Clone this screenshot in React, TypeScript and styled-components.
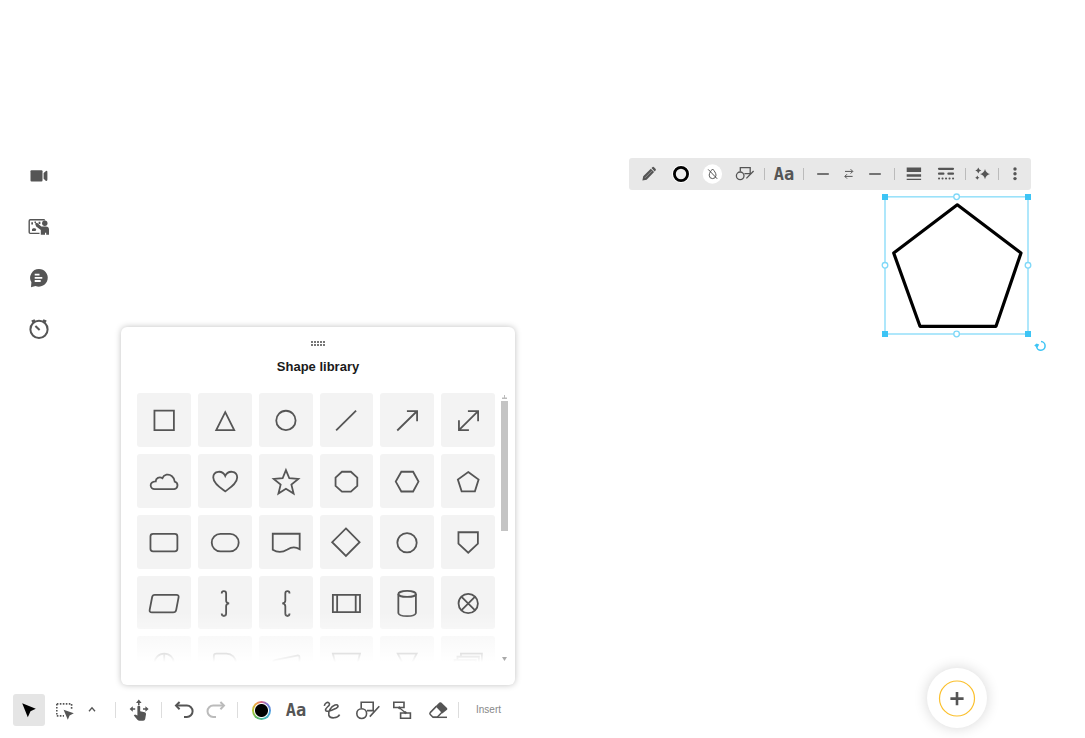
import React from "react";
import styled, { createGlobalStyle } from "styled-components";

const ink = "#555";
const accent = "#3dc4f5";

const GlobalStyle = createGlobalStyle`
  *, *::before, *::after { box-sizing: border-box; }
  body {
    margin: 0;
    background: #fff;
    color: ${ink};
    font-family: "Liberation Sans", Arial, sans-serif;
  }
`;

const Page = styled.div`
  position: relative;
  display: flex;
  flex-direction: column;
  min-height: 100vh;
  overflow: hidden;
`;

const Workspace = styled.div`
  display: flex;
  flex: 1;
`;

const Rail = styled.nav`
  display: flex;
  flex-direction: column;
  gap: 19px;
  width: 121px;
  padding: 160px 0 0 23px;
`;

const IconButton = styled.button<{ $w?: number; $active?: boolean }>`
  display: flex;
  flex: none;
  align-items: center;
  justify-content: center;
  width: ${(p) => p.$w ?? 32}px;
  height: 32px;
  padding: 0;
  border: 0;
  border-radius: 3px;
  background: ${(p) => (p.$active ? "#e5e5e5" : "transparent")};
  color: inherit;
  cursor: pointer;
`;

const TextIcon = styled.span`
  font: bold 17px/20px "DejaVu Sans Mono", monospace;
`;

const IconSvg = styled.svg`
  display: block;
  flex: none;
  fill: none;
  stroke: currentColor;
  stroke-width: 2;
`;

const Library = styled.section`
  align-self: flex-end;
  width: 394px;
  height: 358px;
  margin-bottom: 9px;
  padding: 14px 7px 0 16px;
  border-radius: 6px;
  background: #fff;
  box-shadow: 0 0 6px rgba(0, 0, 0, 0.25);
`;

const Grip = styled.div`
  display: grid;
  grid-template-columns: repeat(5, 2px);
  grid-auto-rows: 2px;
  gap: 1px;
  justify-content: center;
  margin-right: 9px;

  i { background: #777; }
`;

const Title = styled.h2`
  margin: 13px 9px 18px 0;
  color: #1a1a1a;
  font-size: 13px;
  line-height: 16px;
  text-align: center;
`;

const ScrollArea = styled.div`
  position: relative;
  display: flex;
  gap: 6px;
  height: 269px;
  overflow: hidden;
`;

const ShapeGrid = styled.div`
  display: grid;
  flex: 1;
  grid-template-columns: repeat(6, 1fr);
  align-content: start;
  gap: 7px;
`;

const ShapeTile = styled.button`
  aspect-ratio: 1;
  padding: 0;
  border: 0;
  border-radius: 3px;
  background: #f3f3f3;
  color: ${ink};

  svg { width: 100%; height: 100%; }
`;

const Fade = styled.div`
  position: absolute;
  right: 13px;
  bottom: 0;
  left: 0;
  height: 50px;
  background: linear-gradient(rgba(255, 255, 255, 0), #fff);
  pointer-events: none;
`;

const ScrollTrack = styled.div`
  display: flex;
  flex-direction: column;
  align-items: center;
  justify-content: space-between;
  width: 7px;
  padding: 2px 0 1px;
`;

const ScrollThumb = styled.div`
  width: 7px;
  height: 130px;
  margin: 2px 0 auto;
  background: #c4c4c4;
`;

const BottomBar = styled.footer`
  display: flex;
  align-items: center;
  padding: 0 13px 12px;
`;

const ToolGroup = styled.div<{ $gap?: number; $end?: number }>`
  display: flex;
  align-items: center;
  gap: ${(p) => p.$gap ?? 0}px;
  margin-right: ${(p) => p.$end ?? 0}px;
`;

const Divider = styled.span<{ $tight?: boolean }>`
  flex: none;
  width: 1px;
  height: ${(p) => (p.$tight ? 12 : 16)}px;
  margin: ${(p) => (p.$tight ? "0 3px" : "0 7px 0 6px")};
  background: ${(p) => (p.$tight ? "#bbb" : "#ddd")};
`;

const InsertButton = styled.button`
  margin-left: 10px;
  padding: 0;
  border: 0;
  background: none;
  color: #888;
  font: 10px/16px "Liberation Sans", Arial, sans-serif;
`;

const ColorWheel = styled.span`
  display: block;
  width: 19px;
  height: 19px;
  border-radius: 50%;
  background:
    radial-gradient(circle, #000 0 6px, #fff 7px 7px, transparent 8px),
    conic-gradient(#d9668c, #7a6fd0 12%, #4aa3e0 28%, #46b8b0 45%, #5cb85c 60%, #b5c832 75%, #f0a040 90%, #d9668c);
`;

const SelectedObject = styled.div`
  position: absolute;
  top: 158px;
  left: 629px;
`;

const ContextBar = styled.div`
  display: flex;
  align-items: center;
  width: max-content;
  padding: 0 3px 0 4px;
  border-radius: 3px;
  background: #e8e8e8;
`;

const SelectionSvg = styled.svg`
  display: block;
  margin-left: 251px;
`;

const AddButton = styled.button`
  position: absolute;
  right: 98px;
  bottom: 10px;
  display: grid;
  place-items: center;
  width: 60px;
  height: 60px;
  padding: 0;
  border: 0;
  border-radius: 50%;
  background: #fff;
  box-shadow: 0 0 14px rgba(0, 0, 0, 0.16);
  color: ${ink};
`;

type IconProps = { children: React.ReactNode; size?: number };
const Icon = ({ children, size = 32 }: IconProps) => (
  <IconSvg width={size} height={size} viewBox={`0 0 ${size} ${size}`} aria-hidden="true">
    {children}
  </IconSvg>
);

type ToolProps = { label: string; w?: number; active?: boolean; children: React.ReactNode };
const Tool = ({ label, w, active, children }: ToolProps) => (
  <IconButton type="button" aria-label={label} title={label} $w={w} $active={active}>
    {children}
  </IconButton>
);

const solid = { fill: "currentColor", stroke: "none" };

const shapes: [string, React.ReactNode][] = [
  ["Square", <path d="M17.5 17.7H37V37.2H17.5Z" />],
  ["Triangle", <path d="M27.3 19.2 36.3 37.2H18.3Z" />],
  ["Circle", <circle cx="27" cy="27.5" r="9.7" />],
  ["Line", <path d="M16.2 37.4 36.2 17.7" />],
  ["Arrow", <path d="M17.3 37.6 37 18.3M27 18.1H37.2V28.3" />],
  ["Double arrow", <path d="M18 37.3 37.2 18.1M27 18.1H37.2V28.3M18 27.3V37.3H28" />],
  ["Cloud", <path d="M17.8 35.2H37.3A3.9 3.9 0 0 0 37.8 27.6C37.5 23.2 33.6 20 29.6 20.8 27.7 21.2 26.2 22.2 25.5 24.2 22.3 22.5 18.8 24.2 18.8 27.4 15.5 27.6 13.7 29.2 13.7 31.4 13.7 33.6 15.5 35.2 17.8 35.2Z" />],
  ["Heart", <path d="M27.3 37.5C22.5 33.9 15.3 29.5 15.3 23.5 15.3 16.5 24.6 15.9 27.3 22 30 15.9 39.3 16.5 39.3 23.5 39.3 29.5 32 33.9 27.3 37.5Z" />],
  ["Star", <path d="M27 16.1 30.4 24.3 39.4 25 32.5 30.7 34.7 39.6 27 34.8 19.5 39.6 21.7 30.7 14.8 25 23.7 24.3Z" />],
  ["Octagon", <path d="M22 17.8H31L37.4 23.6V32L31 37.7H22L15.6 32V23.6Z" />],
  ["Hexagon", <path d="M21.4 17.8H33.2L38.6 27.7 33.2 37.6H21.4L15.8 27.7Z" />],
  ["Pentagon", <path d="M27.3 18.1 37.7 25.7 34 37.5H20.7L16.9 25.7Z" />],
  ["Rounded rectangle", <rect x="13.5" y="19" width="27" height="17.5" rx="2.6" />],
  ["Terminator", <rect x="13.8" y="19" width="27" height="17.5" rx="8.7" />],
  ["Document", <path d="M13.8 18.8H40.8V34.3C37 31.9 33 31.7 28.5 34.6 23.5 37.6 19 38.1 13.8 34.8Z" />],
  ["Diamond", <path d="M26 13.5 39.7 27.3 26 41.1 12.2 27.3Z" />],
  ["Connector", <circle cx="27.1" cy="27.8" r="9.7" />],
  ["Off-page connector", <path d="M17.5 17.3H37V28.8L27.3 37.8 17.5 28.8Z" />],
  ["Parallelogram", <path d="M17.8 18.9H39.5Q42.2 18.9 41.7 21.5L39.3 33.9Q38.8 36.5 36.2 36.5H15Q12.2 36.5 12.7 33.9L15.2 21.1Q15.6 18.9 17.8 18.9Z" />],
  ["Right brace", <path d="M23.8 17.5Q23.8 15.1 25.9 15.1 28.2 15.1 28.2 17.5V24.9Q28.2 27.1 31.2 27.5 28.2 27.9 28.2 30.3V37.7Q28.2 40.1 25.9 40.1 23.8 40.1 23.8 37.7" />],
  ["Left brace", <path d="M30.6 17.5Q30.6 15.1 28.6 15.1 26.4 15.1 26.4 17.5V24.9Q26.4 27.1 23.4 27.5 26.4 27.9 26.4 30.3V37.7Q26.4 40.1 28.6 40.1 30.6 40.1 30.6 37.7" />],
  ["Predefined process", <path d="M12.9 18.9H40.1V36.3H12.9ZM17.2 18.9V36.3M35.8 18.9V36.3" />],
  ["Cylinder", <><ellipse cx="27.2" cy="18" rx="8.8" ry="3" /><path d="M18.4 18V37.3Q19 40.3 27.2 40.3 35.4 40.3 36 37.3V18" /></>],
  ["Summing junction", <><circle cx="27.3" cy="27.6" r="9.7" /><path d="M20.4 20.7 34.2 34.5M34.2 20.7 20.4 34.5" /></>],
  ["Or junction", <><circle cx="27.3" cy="27.3" r="9.7" /><path d="M27.3 17.5V37M17.5 27.3H37" /></>],
  ["Delay", <path d="M18.5 17.7H28.5A9.6 9.6 0 0 1 28.5 37H15.9V20Q15.9 17.7 18.5 17.7Z" />],
  ["Manual input", <path d="M16 24.3 38.2 19.6Q40.6 19.2 40.6 21.5V37H13.8V27Q13.8 24.8 16 24.3Z" />],
  ["Manual operation", <path d="M12.9 17.6H40.1L35.2 36.5H17.7Z" />],
  ["Merge", <path d="M17.8 17.6H36.7L27.3 36.5Z" />],
  ["Multiple documents", <path d="M20 20V17.6H41V32M16.5 24V20.8H38V34M13.5 24.2H35V37H13.5Z" />],
];

const ShapesIcon = () => (
  <Icon>
    <g strokeWidth="1.6">
      <circle cx="11.7" cy="19.6" r="4.9" />
      <path d="M11.2 14V8.3H23.2V16.6H17M19.8 22.6 29.3 12.2" />
    </g>
  </Icon>
);

const SmallShapesIcon = () => (
  <Icon>
    <g strokeWidth="1.3">
      <circle cx="11.2" cy="17.8" r="3.8" />
      <path d="M11.3 13.6V9.6H21.2V15.6H15.4M17.4 20.4 24.6 13" />
    </g>
  </Icon>
);

const Line = () => (
  <Icon><path strokeWidth="1.6" d="M10.2 16H21.8" /></Icon>
);

export default function App() {
  return (
    <>
      <GlobalStyle />
      <Page>
        <Workspace>
          <Rail aria-label="Collaboration">
            <Tool label="Video call">
              <Icon><g {...solid}><rect x="7.5" y="10.2" width="12" height="11.4" rx="1" /><path d="M20.6 13 23 10.9Q24.4 10.6 24.4 12V19.8Q24.4 21.2 23 20.9L20.6 18.8Z" /></g></Icon>
            </Tool>
            <Tool label="Present">
              <Icon>
                <path strokeWidth="1.4" d="M21.5 9.5Q21.5 8.8 20.5 8.8H7.3Q6.2 8.8 6.2 9.9V21.3Q6.2 22.4 7.3 22.4H16.5" />
                <g {...solid}>
                  <circle cx="21.8" cy="12.2" r="2.7" />
                  <path d="M12 12.6 14 11.8 18.3 15.4H22.8Q26 15.4 26 18.5V23.8H23.2V21.8H22V23.8H17.8V19L13.2 15.4Z" />
                  <path d="M8.3 11.2H10V13.6H8.3ZM11.5 10.5H13V12H11.5ZM15.6 10.8H17.4V13H15.6ZM9 18.2 10 17.2H12.3L13.3 18.8 12.4 20H9Z" />
                </g>
              </Icon>
            </Tool>
            <Tool label="Chat">
              <Icon>
                <path {...solid} d="M16 7A8.8 8.8 0 1 1 12.5 23.9L8 25.2 8.4 20.3A8.8 8.8 0 0 1 16 7Z" />
                <path stroke="#fff" strokeWidth="1.8" d="M11.7 12.6H16.5M11.7 15.9H19.3M11.7 19H17.7" />
              </Icon>
            </Tool>
            <Tool label="Timer">
              <Icon>
                <circle cx="16" cy="16.4" r="8.6" />
                <path strokeWidth="2.6" d="M8.8 8.6 12 7.4M20 7.4 23.2 8.6" />
                <path strokeWidth="2" d="M12.4 13 16.6 17" />
              </Icon>
            </Tool>
          </Rail>

          <Library aria-label="Shape library">
            <Grip>{Array.from({ length: 10 }, (_, i) => <i key={i} />)}</Grip>
            <Title>Shape library</Title>
            <ScrollArea>
              <ShapeGrid>
                {shapes.map(([name, drawing]) => (
                  <ShapeTile key={name} type="button" aria-label={name}>
                    <Icon size={54}><g strokeWidth="1.8">{drawing}</g></Icon>
                  </ShapeTile>
                ))}
              </ShapeGrid>
              <Fade />
              <ScrollTrack>
                <IconSvg width="5" height="4" viewBox="0 0 5 4"><path fill="#bbb" stroke="none" d="M2 0H3V2.4H5V4H0V2.4H2Z" /></IconSvg>
                <ScrollThumb />
                <IconSvg width="5" height="4" viewBox="0 0 5 4"><path fill="#aaa" stroke="none" d="M0 0 2.5 4 5 0Z" /></IconSvg>
              </ScrollTrack>
            </ScrollArea>
          </Library>
        </Workspace>

        <BottomBar>
          <ToolGroup $gap={3} $end={8}>
            <Tool label="Select" active>
              <Icon><path fill="#000" stroke="none" d="M9.2 9.3 22.8 14.8 17.5 17.3 14.8 23.2Z" /></Icon>
            </Tool>
            <Tool label="Marquee select">
              <Icon>
                <path strokeWidth="1.6" strokeDasharray="1.6 1.4" d="M8.8 9.9H23.6V16M8.8 9.9V21.9H16" />
                <path {...solid} d="M15.6 15.8 25.8 19.3 21.6 21.4 19.8 25.8Z" />
              </Icon>
            </Tool>
            <Tool label="More selection tools" w={18}>
              <Icon size={18}><path strokeWidth="1.3" d="M6 10.2 9 6.8 12 10.2" /></Icon>
            </Tool>
          </ToolGroup>
          <Divider />
          <Tool label="Pan">
            <Icon>
              <path strokeWidth="1.5" d="M15.8 7.4V11M8 15H12.2M20 15H24.2" />
              <g {...solid}>
                <path d="M15.8 5.5 18.6 9H13ZM6.6 15 9.8 12.2V17.8ZM25.6 15 22.4 12.2V17.8Z" />
                <path d="M14.4 12.4Q15.8 10.6 17.2 12.4V17.2L21.8 18.2Q23.2 18.6 23 20.2L22.2 25Q21.9 26.8 20.2 26.8H16.6Q15.3 26.8 14.4 25.7L10.8 21.5 12 20.4 14.4 21.4Z" />
              </g>
            </Icon>
          </Tool>
          <Divider />
          <ToolGroup>
            <Tool label="Undo" w={31}>
              <Icon><path d="M7.4 11.6H17.9A5.7 5.7 0 0 1 17.9 23H15" /><path d="M10.6 8 7 11.6 10.6 15.2" /></Icon>
            </Tool>
            <Tool label="Redo" w={31}>
              <Icon><g stroke="#bbb"><path d="M23.6 11.6H13.2A5.7 5.7 0 0 0 13.2 23H16" /><path d="M20.4 8 24 11.6 20.4 15.2" /></g></Icon>
            </Tool>
          </ToolGroup>
          <Divider />
          <ToolGroup $gap={3}>
            <Tool label="Colour"><ColorWheel /></Tool>
            <Tool label="Text"><TextIcon>Aa</TextIcon></Tool>
            <Tool label="Draw">
              <Icon><path strokeWidth="1.6" d="M9.3 11.8C9.8 9 12.4 7.6 14 9 16.4 11.4 10 13.4 10.6 16.2 11.4 19 18.4 15.4 21.2 14.2 24.4 12.4 22.8 10 20 11 16 12.6 12.6 17.6 13.8 21.2 15 25 22.6 24.6 24.6 20.6" /></Icon>
            </Tool>
            <Tool label="Shapes"><ShapesIcon /></Tool>
            <Tool label="Connectors">
              <Icon><g strokeWidth="1.6"><path d="M8.8 8.3H19V13.5H8.8ZM15.6 19H25.4V24.3H15.6Z" /><path strokeWidth="1.2" d="M14 13.5 20.8 19" /><circle cx="14.4" cy="13.8" r="1" strokeWidth="1" /><circle cx="20.4" cy="18.6" r="1" strokeWidth="1" /></g></Icon>
            </Tool>
            <Tool label="Eraser">
              <Icon>
                <path strokeWidth="1.5" d="M16.3 12.4 10.2 18.6Q9.4 19.6 10.3 20.5L13 23.3H17.2L22 18.3" />
                <path {...solid} d="M15.6 12.2 19.4 8.6Q20.4 7.9 21.3 8.6L27 13.9Q27.7 14.8 27 15.7L22.3 19.6Z" />
                <path strokeWidth="1.5" d="M13 23.3H27" />
              </Icon>
            </Tool>
          </ToolGroup>
          <Divider />
          <InsertButton type="button">Insert</InsertButton>
        </BottomBar>

        <SelectedObject>
          <ContextBar role="toolbar" aria-label="Shape style">
            <Tool label="Edit style">
              <Icon>
                <path {...solid} d="M9.4 22.4 10.2 18.2 17.8 10.8 21.1 14.1 13.6 21.7ZM18.5 10.1 19.6 9.1Q20.3 8.6 21 9.2L22.7 10.9Q23.2 11.6 22.7 12.3L21.7 13.4Z" />
                <path stroke="#bbb" strokeWidth="0.6" d="M12 19.8 18.8 13" />
              </Icon>
            </Tool>
            <Tool label="Line colour">
              <Icon><circle cx="16" cy="16" r="9" fill="#fff" stroke="none" /><circle cx="16" cy="16" r="6.6" fill="#eee" stroke="#000" strokeWidth="2.8" /></Icon>
            </Tool>
            <Tool label="Fill colour">
              <Icon>
                <circle cx="15.4" cy="16" r="9.7" fill="#fff" stroke="none" />
                <path strokeWidth="1" d="M15.6 11C14 12.8 12.2 15 12.2 17.2A3.4 3.4 0 0 0 19 17.2C19 15 17.2 12.8 15.6 11ZM11.2 11.4 20.2 20.8" />
              </Icon>
            </Tool>
            <Tool label="Change shape"><SmallShapesIcon /></Tool>
            <Divider $tight />
            <Tool label="Text style"><TextIcon>Aa</TextIcon></Tool>
            <Divider $tight />
            <Tool label="Line start"><Line /></Tool>
            <Tool label="Swap ends" w={20}>
              <Icon size={20}><path strokeWidth="1" d="M6 7.4H13.6M11.6 5.2 13.8 7.4 11.6 9.6M13.6 12.4H6M8 10.2 5.8 12.4 8 14.6" /></Icon>
            </Tool>
            <Tool label="Line end"><Line /></Tool>
            <Divider $tight />
            <Tool label="Line thickness">
              <Icon><g {...solid}><path d="M8.7 9.6H23.1V14H8.7ZM8.7 16.2H23.1V18.8H8.7ZM8.7 20.8H23.1V21.9H8.7Z" /></g></Icon>
            </Tool>
            <Tool label="Line style">
              <Icon>
                <path d="M9 10.8H23" strokeWidth="2.2" strokeLinecap="round" />
                <path d="M9 15.7H13.4M18.4 15.7H23" strokeWidth="2.2" strokeLinecap="round" />
                <path d="M9 20.6H23.4" strokeWidth="2" strokeLinecap="round" strokeDasharray="0.1 3.4" />
              </Icon>
            </Tool>
            <Divider $tight />
            <Tool label="Smart suggestions" w={26}>
              <Icon size={26}><g {...solid}><path d="M16 8Q17 12.2 21 13.1 17 14 16 18.2 15 14 11 13.1 15 12.2 16 8ZM9.3 6.6Q9.9 8.9 12.3 9.5 9.9 10.1 9.3 12.4 8.7 10.1 6.3 9.5 8.7 8.9 9.3 6.6ZM8.3 14.6Q8.8 16.3 10.4 16.7 8.8 17.1 8.3 18.8 7.8 17.1 6.2 16.7 7.8 16.3 8.3 14.6Z" /></g></Icon>
            </Tool>
            <Divider $tight />
            <Tool label="More options" w={26}>
              <Icon size={26}><g {...solid}><circle cx="13" cy="8" r="1.7" /><circle cx="13" cy="12.8" r="1.7" /><circle cx="13" cy="17.6" r="1.7" /></g></Icon>
            </Tool>
          </ContextBar>
          <SelectionSvg width="170" height="170" viewBox="0 0 170 170" role="img" aria-label="Selected pentagon">
            <path d="M77.3 14.8 141 63 116 136.3H40L13.7 63Z" fill="none" stroke="#000" strokeWidth="3.2" strokeLinejoin="round" />
            <rect x="5" y="6.8" width="143" height="137.2" fill="none" stroke="#9be2fa" strokeWidth="1.6" />
            <g fill={accent}>
              <rect x="2" y="4" width="6" height="6" /><rect x="145" y="4" width="6" height="6" />
              <rect x="2" y="141" width="6" height="6" /><rect x="145" y="141" width="6" height="6" />
            </g>
            <g fill="#fff" stroke="#7fd8f8" strokeWidth="1.3">
              <circle cx="76.6" cy="6.8" r="2.8" /><circle cx="76.6" cy="144" r="2.8" />
              <circle cx="5" cy="75.3" r="2.8" /><circle cx="148" cy="75.3" r="2.8" />
            </g>
            <g fill="none" stroke={accent}>
              <path strokeWidth="1.5" d="M161 151.6A4.3 4.3 0 1 1 156.5 156.2" />
              <path fill={accent} stroke="none" d="M154.2 155.6 156.6 153.4 159.2 154.4 157.4 157.8Z" />
            </g>
          </SelectionSvg>
        </SelectedObject>

        <AddButton type="button" aria-label="Add">
          <IconSvg width="38" height="38" viewBox="0 0 38 38">
            <circle cx="19" cy="19.5" r="17.5" stroke="#fbc02d" strokeWidth="1.2" />
            <path strokeWidth="2.6" d="M19 13V26.2M12.4 19.6H25.6" />
          </IconSvg>
        </AddButton>
      </Page>
    </>
  );
}
